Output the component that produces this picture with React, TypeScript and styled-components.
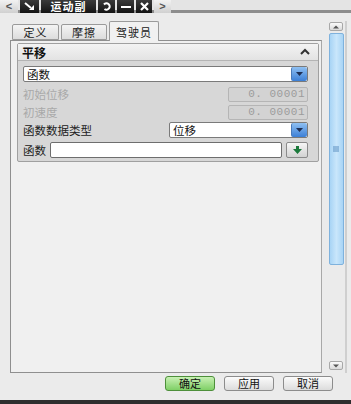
import styled, { createGlobalStyle } from 'styled-components';

const Global = createGlobalStyle`
  html, body { margin: 0; padding: 0; background: #e9e9e9; }
  body { font-family: "Noto Sans CJK SC", "Noto Sans", sans-serif; }
`;

const Window = styled.div`
  width: 351px;
  height: 404px;
  display: flex;
  flex-direction: column;
  background: #ebebeb;
  overflow: hidden;
`;

const TitleBar = styled.div`
  height: 13px;
  display: flex;
  gap: 2px;
  background: linear-gradient(#e4e4e4 0 10px, #8d8d8d 10px 13px);
`;

const TitleBtn = styled.div<{ $light?: boolean; $w: number }>`
  width: ${p => p.$w}px;
  height: 13px;
  display: flex;
  align-items: center;
  justify-content: center;
  background: ${p => (p.$light ? 'linear-gradient(#f2f2f2, #d0d0d0)' : 'linear-gradient(#3a3a3a, #141414)')};
  color: ${p => (p.$light ? '#555' : '#fff')};
  font-family: "Liberation Sans", "Noto Sans CJK SC", sans-serif;
  font-size: 11px;
  font-weight: bold;
  line-height: 11px;
`;

const TitleText = styled.span`
  font-family: "Noto Sans CJK SC", sans-serif;
  font-size: 11px;
  line-height: 11px;
  letter-spacing: 1px;
`;

const Body = styled.div`
  flex: 1;
  display: flex;
  padding-top: 8px;
  min-height: 0;
`;

const LeftCol = styled.div`
  margin-left: 10px;
  width: 312px;
  display: flex;
  flex-direction: column;
`;

const TabRow = styled.div`
  height: 19px;
  display: flex;
  align-items: flex-end;
  gap: 2px;
  padding-left: 2px;
  position: relative;
  z-index: 1;
`;

const Tab = styled.div<{ $active?: boolean; $w: number }>`
  width: ${p => p.$w}px;
  height: ${p => (p.$active ? 20 : 16)}px;
  margin-bottom: ${p => (p.$active ? -1 : 0)}px;
  box-sizing: border-box;
  border: 1px solid #9a9a9a;
  border-bottom: ${p => (p.$active ? 'none' : '1px solid #9a9a9a')};
  border-radius: 2px 2px 0 0;
  background: ${p => (p.$active ? '#f1f1f1' : 'linear-gradient(#f4f4f4, #dcdcdc)')};
  font-size: 11px;
  color: #222;
  display: flex;
  align-items: center;
  justify-content: center;
  letter-spacing: 1px;
`;

const Panel = styled.div`
  flex: 1;
  border: 1px solid #8f8f8f;
  border-right-color: #a8a8a8;
  background: #f0f0f0;
  padding: 2px 2px 0 6px;
`;

const Group = styled.div`
  border: 1px solid #a0a0a0;
  border-radius: 2px;
  background: #d7d7d7;
`;

const GroupHead = styled.div`
  height: 16px;
  display: flex;
  align-items: center;
  justify-content: space-between;
  padding: 0 4px 0 4px;
  background: linear-gradient(#f3f3f3, #e3e3e3);
  border-bottom: 1px solid #b4b4b4;
  font-size: 12px;
  font-weight: bold;
  color: #111;
`;

const Collapse = styled.svg`
  width: 10px;
  height: 8px;
  margin-right: 4px;
`;

const GroupBody = styled.div`
  padding: 5px 10px 3px 5px;
  display: flex;
  flex-direction: column;
  gap: 2px;
`;

const Row = styled.div<{ $gapAbove?: number }>`
  height: 16px;
  margin-top: ${p => p.$gapAbove ?? 0}px;
  display: flex;
  align-items: center;
  gap: 4px;
  font-size: 11.5px;
  color: #222;
`;

const Label = styled.span<{ $off?: boolean }>`
  flex: 1;
  color: ${p => (p.$off ? '#a9a9a9' : '#222')};
  white-space: nowrap;
`;

const Select = styled.div<{ $w?: number }>`
  ${p => (p.$w ? `width: ${p.$w}px;` : 'flex: 1;')}
  height: 16px;
  box-sizing: border-box;
  border: 1px solid #7a7a7a;
  border-radius: 2px;
  background: #fff;
  display: flex;
  align-items: center;
  font-size: 11.5px;
  color: #111;
  padding-left: 3px;
  overflow: hidden;
`;

const SelectText = styled.span`
  flex: 1;
`;

const DropBtn = styled.div`
  width: 15px;
  height: 14px;
  border-radius: 2px;
  background: linear-gradient(#8fc0f2, #3c7fd6);
  border-left: 1px solid #4a7ab8;
  display: flex;
  align-items: center;
  justify-content: center;
`;

const NumBox = styled.div`
  width: 80px;
  height: 15px;
  box-sizing: border-box;
  border: 1px solid #b5b5b5;
  border-radius: 2px;
  background: #d3d3d3;
  color: #9c9c9c;
  font-family: "Liberation Mono", monospace;
  font-size: 11px;
  text-align: right;
  padding-right: 2px;
  line-height: 13px;
  letter-spacing: 0.5px;
`;

const TextBox = styled.div`
  flex: 1;
  height: 16px;
  box-sizing: border-box;
  border: 1px solid #6e6e6e;
  border-radius: 2px;
  background: #fff;
`;

const IconBtn = styled.div`
  width: 22px;
  height: 16px;
  box-sizing: border-box;
  border: 1px solid #8a8a8a;
  border-radius: 2px;
  background: linear-gradient(#f6f6f6, #d2d2d2);
  display: flex;
  align-items: center;
  justify-content: center;
`;

const ScrollCol = styled.div`
  width: 24px;
  margin-left: 1px;
  border-right: 2px solid #cfcfcf;
  display: flex;
  flex-direction: column;
  align-items: center;
  padding: 1px 0 3px 4px;
  box-sizing: border-box;
`;

const ArrowBtn = styled.div`
  width: 14px;
  height: 9px;
  box-sizing: border-box;
  border: 1px solid #a8a8a8;
  border-radius: 2px;
  background: linear-gradient(#fafafa, #dadada);
  display: flex;
  align-items: center;
  justify-content: center;
`;

const Track = styled.div`
  flex: 1;
  width: 15px;
  margin: 2px 0;
  display: flex;
  flex-direction: column;
`;

const Thumb = styled.div`
  height: 232px;
  box-sizing: border-box;
  border: 1px solid #7fb2dd;
  border-radius: 2px;
  background: linear-gradient(90deg, #a8d4f5, #c9e6fb 50%, #a8d4f5);
  display: flex;
  align-items: center;
  justify-content: center;
`;

const Footer = styled.div`
  height: 27px;
  display: flex;
  justify-content: flex-end;
  gap: 9px;
  padding: 3px 18px 0 0;
  box-sizing: border-box;
`;

const Btn = styled.div<{ $primary?: boolean }>`
  width: 50px;
  height: 15px;
  box-sizing: border-box;
  border: 1px solid ${p => (p.$primary ? '#4d8f3a' : '#8c8c8c')};
  border-radius: 3px;
  background: ${p => (p.$primary ? 'linear-gradient(#c8f0b4, #7fd066)' : 'linear-gradient(#fbfbfb, #dcdcdc)')};
  font-size: 11px;
  color: #111;
  display: flex;
  align-items: center;
  justify-content: center;
  line-height: 13px;
`;

const BottomStrip = styled.div`
  height: 4px;
  background: #2e2e2e;
`;

const Down = () => (
  <svg width="9" height="6" viewBox="0 0 9 6">
    <path d="M1 1h7L4.5 5z" fill="#1e2f55" />
  </svg>
);

export default function App() {
  return (
    <Window>
      <Global />
      <TitleBar>
        <TitleBtn $light $w={18}>&lt;</TitleBtn>
        <TitleBtn $w={19}>
          <svg width="11" height="10" viewBox="0 0 11 10">
            <path d="M1 1l6 5" stroke="#fff" strokeWidth="2" />
            <path d="M5 8h5V3z" fill="#fff" />
          </svg>
        </TitleBtn>
        <TitleBtn $w={55}><TitleText>运动副</TitleText></TitleBtn>
        <TitleBtn $w={17}>
          <svg width="10" height="9" viewBox="0 0 10 9">
            <path d="M2 2.5A3.2 3.2 0 1 1 2.5 7" fill="none" stroke="#fff" strokeWidth="2" />
          </svg>
        </TitleBtn>
        <TitleBtn $w={17}>
          <svg width="10" height="4" viewBox="0 0 10 4">
            <rect x="0" y="1" width="10" height="2" fill="#fff" />
          </svg>
        </TitleBtn>
        <TitleBtn $w={16}>
          <svg width="9" height="9" viewBox="0 0 9 9">
            <path d="M1 1l7 7M8 1l-7 7" stroke="#fff" strokeWidth="2.2" />
          </svg>
        </TitleBtn>
        <TitleBtn $light $w={17}>&gt;</TitleBtn>
      </TitleBar>
      <Body>
        <LeftCol>
          <TabRow>
            <Tab $w={47}>定义</Tab>
            <Tab $w={46}>摩擦</Tab>
            <Tab $w={50} $active>驾驶员</Tab>
          </TabRow>
          <Panel>
            <Group>
              <GroupHead>
                <span>平移</span>
                <Collapse viewBox="0 0 10 8">
                  <path d="M1 6l4-4 4 4" fill="none" stroke="#333" strokeWidth="2" />
                </Collapse>
              </GroupHead>
              <GroupBody>
                <Row>
                  <Select>
                    <SelectText>函数</SelectText>
                    <DropBtn><Down /></DropBtn>
                  </Select>
                </Row>
                <Row $gapAbove={2}>
                  <Label $off>初始位移</Label>
                  <NumBox>0. 00001</NumBox>
                </Row>
                <Row>
                  <Label $off>初速度</Label>
                  <NumBox>0. 00001</NumBox>
                </Row>
                <Row>
                  <Label>函数数据类型</Label>
                  <Select $w={139}>
                    <SelectText>位移</SelectText>
                    <DropBtn><Down /></DropBtn>
                  </Select>
                </Row>
                <Row $gapAbove={2}>
                  <span>函数</span>
                  <TextBox />
                  <IconBtn>
                    <svg width="9" height="8" viewBox="0 0 9 8">
                      <path d="M3 0h3v3h3L4.5 8 0 3h3z" fill="#1c7a3c" />
                    </svg>
                  </IconBtn>
                </Row>
              </GroupBody>
            </Group>
          </Panel>
        </LeftCol>
        <ScrollCol>
          <ArrowBtn>
            <svg width="6" height="4" viewBox="0 0 6 4"><path d="M0 3.5L3 0.5 6 3.5z" fill="#555" /></svg>
          </ArrowBtn>
          <Track>
            <Thumb>
              <svg width="6" height="6" viewBox="0 0 6 6">
                <path d="M0 1h6M0 3h6M0 5h6" stroke="#5b8fc0" strokeWidth="1" />
              </svg>
            </Thumb>
          </Track>
          <ArrowBtn>
            <svg width="6" height="4" viewBox="0 0 6 4"><path d="M0 0.5L3 3.5 6 0.5z" fill="#555" /></svg>
          </ArrowBtn>
        </ScrollCol>
      </Body>
      <Footer>
        <Btn $primary>确定</Btn>
        <Btn>应用</Btn>
        <Btn>取消</Btn>
      </Footer>
      <BottomStrip />
    </Window>
  );
}
